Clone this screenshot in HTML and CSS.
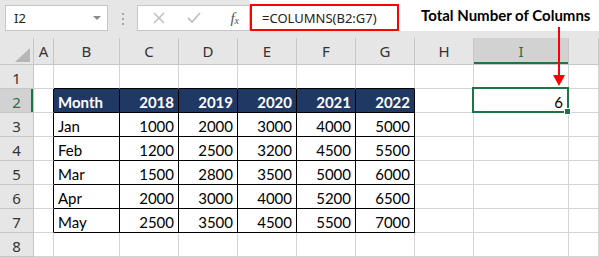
FILE: index.html
```html
<!DOCTYPE html>
<html lang="en">
<head>
    <meta charset="UTF-8">
    <title>COLUMNS function</title>
    <link rel="stylesheet" href="styles.css">
</head>
<body>
<div class="app">
    <div class="toolbar">
        <div class="namebox"><span>I2</span><span class="caret"></span></div>
        <div class="grip"><i></i><i></i><i></i></div>
        <div class="fxbox">
            <svg class="ico" width="12" height="12" viewBox="0 0 12 12"><path d="M1 1L11 11M11 1L1 11" stroke="#c0c0c0" stroke-width="1.6"/></svg>
            <svg class="ico" width="14" height="12" viewBox="0 0 14 12"><path d="M1 6L5 10L13 1" stroke="#c0c0c0" stroke-width="1.8" fill="none"/></svg>
            <span class="fx">f<sub>x</sub></span>
        </div>
        <div class="formula">
            <div class="formula-text">=COLUMNS(B2:G7)</div>
            <div class="note">Total Number of Columns</div>
        </div>
    </div>

    <div class="sheet">
        <div class="hd corner"><span class="tri"></span></div>
        <div class="hd">A</div><div class="hd">B</div><div class="hd">C</div><div class="hd">D</div>
        <div class="hd">E</div><div class="hd">F</div><div class="hd">G</div><div class="hd">H</div>
        <div class="hd sel-col">I</div><div class="hd"></div>

        <div class="rh">1</div>
        <div class="c"></div><div class="c eb"></div><div class="c eb"></div><div class="c eb"></div>
        <div class="c eb"></div><div class="c eb"></div><div class="c eb"></div><div class="c"></div>
        <div class="c"></div><div class="c"></div>

        <div class="rh sel-row">2</div>
        <div class="c er"></div><div class="c t th">Month</div><div class="c t th n">2018</div><div class="c t th n">2019</div>
        <div class="c t th n">2020</div><div class="c t th n">2021</div><div class="c t th n">2022</div><div class="c"></div>
        <div class="c n active">6</div><div class="c"></div>

        <div class="rh">3</div>
        <div class="c er"></div><div class="c t">Jan</div><div class="c t n">1000</div><div class="c t n">2000</div>
        <div class="c t n">3000</div><div class="c t n">4000</div><div class="c t n">5000</div><div class="c"></div>
        <div class="c"></div><div class="c"></div>

        <div class="rh">4</div>
        <div class="c er"></div><div class="c t">Feb</div><div class="c t n">1200</div><div class="c t n">2500</div>
        <div class="c t n">3200</div><div class="c t n">4500</div><div class="c t n">5500</div><div class="c"></div>
        <div class="c"></div><div class="c"></div>

        <div class="rh">5</div>
        <div class="c er"></div><div class="c t">Mar</div><div class="c t n">1500</div><div class="c t n">2800</div>
        <div class="c t n">3500</div><div class="c t n">5000</div><div class="c t n">6000</div><div class="c"></div>
        <div class="c"></div><div class="c"></div>

        <div class="rh">6</div>
        <div class="c er"></div><div class="c t">Apr</div><div class="c t n">2000</div><div class="c t n">3000</div>
        <div class="c t n">4000</div><div class="c t n">5200</div><div class="c t n">6500</div><div class="c"></div>
        <div class="c"></div><div class="c"></div>

        <div class="rh">7</div>
        <div class="c er"></div><div class="c t">May</div><div class="c t n">2500</div><div class="c t n">3500</div>
        <div class="c t n">4500</div><div class="c t n">5500</div><div class="c t n">7000</div><div class="c"></div>
        <div class="c"></div><div class="c"></div>

        <div class="rh">8</div>
        <div class="c"></div><div class="c"></div><div class="c"></div><div class="c"></div>
        <div class="c"></div><div class="c"></div><div class="c"></div><div class="c"></div>
        <div class="c"></div><div class="c"></div>
    </div>

    <svg class="arrow" width="12" height="60" viewBox="0 0 12 60"><rect x="5" y="0" width="2" height="50" fill="#ff0000"/><path d="M0 48H12L6 59Z" fill="#ff0000"/></svg>
</div>
</body>
</html>
```

FILE: styles.css
```css
body {
    margin: 0;
    background: #ffffff;
}
.app {
    position: relative;
    width: 599px;
    height: 257px;
    overflow: hidden;
}
.toolbar {
    display: flex;
    align-items: flex-start;
    height: 38px;
    background: #e6e6e6;
}
.namebox {
    display: flex;
    align-items: center;
    justify-content: space-between;
    box-sizing: border-box;
    width: 103px;
    height: 26px;
    margin: 5px 0 0 5px;
    padding: 0 6px 0 8px;
    background: #fff;
    border: 1px solid #c6c6c6;
    font: 13px "Noto Sans", sans-serif;
    color: #222;
}
.caret {
    width: 0;
    height: 0;
    border-left: 4px solid transparent;
    border-right: 4px solid transparent;
    border-top: 4px solid #8a8a8a;
}
.grip {
    display: flex;
    flex-direction: column;
    align-items: center;
    gap: 3px;
    width: 29px;
    padding-top: 13px;
}
.grip i {
    width: 2px;
    height: 2px;
    background: #a6a6a6;
}
.fxbox {
    display: flex;
    align-items: center;
    box-sizing: border-box;
    width: 113px;
    height: 26px;
    margin-top: 5px;
    padding: 0 10px 0 15px;
    gap: 22px;
    background: #fff;
    border: 1px solid #c6c6c6;
}
.fx {
    margin-left: auto;
    font: italic 15px "Liberation Serif", serif;
    color: #555;
}
.fx sub {
    font-size: 10px;
    vertical-align: -1px;
}
.formula {
    display: flex;
    align-items: flex-start;
    flex: 1;
    height: 31px;
    background: #fff;
}
.formula-text {
    box-sizing: border-box;
    width: 149px;
    height: 27px;
    margin-top: 4px;
    padding: 3px 0 0 10px;
    border: 2px solid #ff0000;
    font: 13px "Noto Sans", sans-serif;
    color: #222;
}
.note {
    margin: 6px 0 0 22px;
    font: bold 15px "Lato", sans-serif;
    color: #000;
}
.sheet {
    display: grid;
    grid-template-columns: 34px 20px 66px 59px 59px 59px 59px 59px 59px 95px 1fr;
    grid-template-rows: 27px repeat(8, 24px);
}
.hd, .rh, .c {
    box-sizing: border-box;
    border-right: 1px solid #d4d4d4;
    border-bottom: 1px solid #d4d4d4;
}
.hd {
    display: flex;
    align-items: center;
    justify-content: center;
    background: #e6e6e6;
    border-color: #c6c6c6;
    font: 15px "Noto Sans", sans-serif;
    color: #333;
}
.corner {
    align-items: flex-end;
    justify-content: flex-end;
    padding: 0 3px 2px 0;
}
.tri {
    width: 0;
    height: 0;
    border-left: 15px solid transparent;
    border-bottom: 14px solid #b6b6b6;
}
.sel-col {
    background: #d2d2d2;
    color: #217346;
    box-shadow: inset 0 -2px 0 #217346;
}
.rh {
    display: flex;
    align-items: flex-end;
    justify-content: center;
    line-height: 20px;
    background: #e6e6e6;
    border-color: #c6c6c6;
    font: 15px "Noto Sans", sans-serif;
    color: #333;
}
.sel-row {
    background: #d2d2d2;
    color: #217346;
    box-shadow: inset -2px 0 0 #217346;
}
.c {
    display: flex;
    align-items: flex-end;
    padding: 0 4px;
    font: 15px "Lato", sans-serif;
    line-height: 19px;
    color: #000;
}
.n {
    justify-content: flex-end;
}
.t {
    border-right-color: #000;
    border-bottom-color: #000;
}
.er {
    border-right-color: #000;
}
.eb {
    border-bottom-color: #000;
}
.th {
    background: #203864;
    color: #fff;
    font-weight: bold;
}
.active {
    position: relative;
    padding-right: 5px;
}
.active::before {
    content: "";
    position: absolute;
    left: -2px;
    top: -2px;
    right: -1px;
    bottom: -1px;
    border: 2px solid #217346;
}
.active::after {
    content: "";
    position: absolute;
    right: -3px;
    bottom: -3px;
    width: 5px;
    height: 5px;
    background: #217346;
    border: 1px solid #fff;
}
.arrow {
    position: absolute;
    left: 553px;
    top: 27px;
}
```
